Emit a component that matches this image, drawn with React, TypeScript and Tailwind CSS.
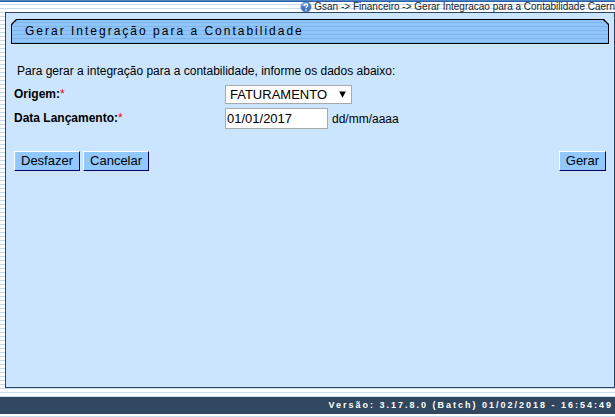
import { useState } from "react";
import type { FormEvent } from "react";

const buttonStyle =
  "h-5 border border-t-white border-l-white border-r-[#000060] border-b-[#000060] bg-[#90c8ff] px-1.5 text-[13px] leading-4 text-black";

const HelpIcon = () => (
  <svg viewBox="0 0 12 12" className="h-3 w-3 shrink-0" aria-hidden="true">
    <circle cx="6" cy="6" r="5.2" fill="#3f74ba" stroke="#7f9fca" strokeWidth="0.8" />
    <ellipse cx="5.2" cy="3.6" rx="3.4" ry="2.2" fill="#7fabe0" />
    <path
      d="M4.2 4.7 C4.2 2.5 7.8 2.5 7.8 4.6 C7.8 5.8 6 5.8 6 7.2"
      fill="none"
      stroke="#ffffff"
      strokeWidth="1.2"
    />
    <circle cx="6" cy="9" r="0.8" fill="#ffffff" />
  </svg>
);

const Breadcrumb = () => (
  <nav className="flex h-2.5 items-center justify-end gap-0.5 overflow-hidden text-[10px] leading-[10px] whitespace-nowrap text-[#222222]">
    <HelpIcon />
    <span>Gsan -&gt; Financeiro -&gt; Gerar Integracao para a Contabilidade Caern</span>
  </nav>
);

// bar with the two top corners cut, the outer box works as the border
const TitleBar = ({ title }: { title: string }) => (
  <div className="bg-black p-px [clip-path:polygon(5px_0,calc(100%-5px)_0,100%_5px,100%_100%,0_100%,0_5px)]">
    <h1 className="h-[23px] bg-[#90c5fa] bg-[repeating-linear-gradient(to_bottom,transparent_0px,transparent_2px,#7eb4ec_2px,#7eb4ec_3px,transparent_3px,transparent_4px)] pl-[13px] text-[12px] leading-[23px] tracking-[2px] text-black [clip-path:polygon(5px_0,calc(100%-5px)_0,100%_5px,100%_100%,0_100%,0_5px)]">
      {title}
    </h1>
  </div>
);

const App = () => {
  const [origem, setOrigem] = useState("FATURAMENTO");
  const [data, setData] = useState("01/01/2017");

  const desfazer = () => {
    setOrigem("FATURAMENTO");
    setData("01/01/2017");
  };

  const gerar = (e: FormEvent) => {
    e.preventDefault();
  };

  return (
    <div className="flex min-h-screen flex-col bg-white bg-[repeating-linear-gradient(to_bottom,#c3ddef_0px,#c3ddef_1px,#ffffff_1px,#ffffff_4px)] font-['Liberation_Sans',Arial,sans-serif] text-black">
      <header>
        <div className="h-0.5 border-b border-[#2f5f9c] bg-[#4a84c8]"></div>
        <Breadcrumb />
      </header>

      <main className="ml-[5px] flex-1 border border-[#2d4460] bg-[#cbe5ff] px-[5px] pt-1.5">
        <TitleBar title="Gerar Integração para a Contabilidade" />

        <form onSubmit={gerar} className="px-[3px] pt-[19px] text-[12px] leading-4">
          <p className="pl-[3px]">
            Para gerar a integração para a contabilidade, informe os dados abaixo:
          </p>

          <div className="mt-1.5 flex items-center">
            <label htmlFor="origem" className="w-[211px] pb-0.5 font-bold">
              Origem:<span className="font-normal text-[#ff0000]">*</span>
            </label>
            <div className="relative">
              <select
                id="origem"
                value={origem}
                onChange={(e) => setOrigem(e.target.value)}
                className="block h-[19px] w-[127px] appearance-none border border-[#a9a9a9] bg-white pl-1 text-[13px] leading-4"
              >
                <option value="FATURAMENTO">FATURAMENTO</option>
                <option value="ARRECADACAO">ARRECADACAO</option>
              </select>
              <svg
                viewBox="0 0 7 7"
                className="pointer-events-none absolute top-1.5 right-1.5 h-[7px] w-[7px]"
                aria-hidden="true"
              >
                <path d="M0.2 0.5 H6.8 L3.5 6.8 Z" fill="#000000" />
              </svg>
            </div>
          </div>

          <div className="mt-1 flex items-center">
            <label htmlFor="data" className="w-[211px] pb-0.5 font-bold">
              Data Lançamento:<span className="font-normal text-[#ff0000]">*</span>
            </label>
            <input
              id="data"
              type="text"
              maxLength={10}
              value={data}
              onChange={(e) => setData(e.target.value)}
              className="h-[21px] w-[103px] border border-[#a9a9a9] bg-white pl-px text-[13px]"
            />
            <span className="ml-1">dd/mm/aaaa</span>
          </div>

          <div className="mt-[22px] flex gap-[3px]">
            <button type="button" onClick={desfazer} className={buttonStyle}>
              Desfazer
            </button>
            <button type="button" className={buttonStyle}>
              Cancelar
            </button>
            <button type="submit" className={`ml-auto ${buttonStyle}`}>
              Gerar
            </button>
          </div>
        </form>
      </main>

      <footer className="mt-[9px] mb-[3px] bg-[#30475f] pr-0.5 text-right text-[9px] leading-[17px] font-bold tracking-[2px] text-white">
        Versão: 3.17.8.0 (Batch) 01/02/2018 - 16:54:49
      </footer>
    </div>
  );
};

export default App;
